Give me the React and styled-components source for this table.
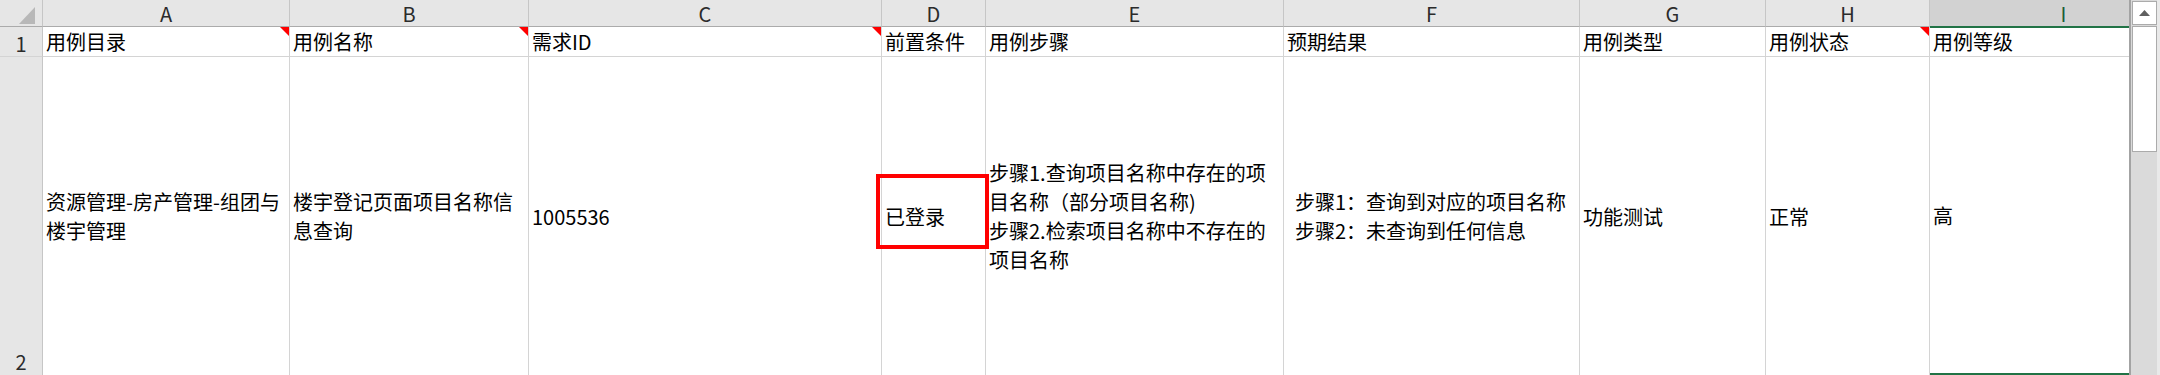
import React from "react";
import styled, { createGlobalStyle, css } from "styled-components";

const GlobalStyle = createGlobalStyle`
  html, body { margin: 0; padding: 0; background: #ffffff; }
  * { box-sizing: border-box; }
`;

const FONT = `"Liberation Sans Narrow", "Noto Sans CJK SC", "Noto Sans", sans-serif`;
const GRID = "#d4d4d4";
const HEAD_LINE = "#c6c6c6";
const GREEN = "#217346";

const columns = [
  { key: "A", width: 247, title: "用例目录", comment: true, lines: ["资源管理-房产管理-组团与", "楼宇管理"] },
  { key: "B", width: 239, title: "用例名称", comment: true, lines: ["楼宇登记页面项目名称信", "息查询"] },
  { key: "C", width: 353, title: "需求ID", comment: true, lines: ["1005536"] },
  { key: "D", width: 104, title: "前置条件", lines: ["已登录"], highlight: true },
  {
    key: "E",
    width: 298,
    title: "用例步骤",
    lines: ["步骤1.查询项目名称中存在的项", "目名称（部分项目名称)", "步骤2.检索项目名称中不存在的", "项目名称"],
  },
  {
    key: "F",
    width: 296,
    title: "预期结果",
    lines: ["步骤1：查询到对应的项目名称", "步骤2：未查询到任何信息"],
    indent: true,
  },
  { key: "G", width: 186, title: "用例类型", lines: ["功能测试"] },
  { key: "H", width: 164, title: "用例状态", comment: true, lines: ["正常"] },
  { key: "I", width: 268, title: "用例等级", lines: ["高"], selected: true },
];

const Window = styled.div`
  display: flex;
  width: 2160px;
  height: 375px;
  overflow: hidden;
  font-family: ${FONT};
  color: #000;
`;

const Sheet = styled.div`
  flex: 1;
  min-width: 0;
  display: grid;
  grid-template-columns: 43px ${(p) => p.$cols};
  grid-template-rows: 27px 30px 318px;
  overflow: hidden;
  background: #fff;
`;

const Corner = styled.div`
  background: #e6e6e6;
  border-right: 1px solid ${HEAD_LINE};
  border-bottom: 1px solid #ababab;
  display: flex;
  justify-content: flex-end;
  align-items: flex-end;
  padding: 0 7px 2px 0;
`;

const CornerMark = styled.div`
  width: 0;
  height: 0;
  border-left: 16px solid transparent;
  border-bottom: 17px solid #b8b8b8;
`;

const ColHeader = styled.div`
  position: relative;
  background: ${(p) => (p.$selected ? "#d2d2d2" : "#e6e6e6")};
  border-right: 1px solid ${HEAD_LINE};
  border-bottom: 1px solid ${(p) => (p.$selected ? GREEN : "#ababab")};
  ${(p) =>
    p.$selected &&
    css`
      box-shadow: 0 1px 0 ${GREEN};
      z-index: 1;
    `}
  display: flex;
  justify-content: center;
  align-items: center;
  font-size: 20px;
  line-height: 24px;
  padding-top: 2px;
  color: ${(p) => (p.$selected ? "#1b5e38" : "#2b2b2b")};
`;

const RowHeader = styled.div`
  background: #e6e6e6;
  border-right: 1px solid ${HEAD_LINE};
  border-bottom: ${(p) => (p.$last ? "none" : `1px solid ${GRID}`)};
  display: flex;
  justify-content: center;
  align-items: flex-end;
  font-size: 20px;
  line-height: 20px;
  padding-bottom: ${(p) => (p.$last ? "3px" : "2px")};
  color: #2b2b2b;
`;

const Cell = styled.div`
  position: relative;
  border-right: 1px solid ${GRID};
  border-bottom: ${(p) =>
    p.$selected && p.$last ? `2px solid ${GREEN}` : p.$last ? "none" : `1px solid ${GRID}`};
  display: flex;
  align-items: center;
  padding-left: ${(p) => (p.$indent ? "11px" : "3px")};
  font-size: 20px;
  line-height: 29px;
  white-space: pre;
  overflow: visible;
`;

const Lines = styled.div`
  display: flex;
  flex-direction: column;
`;

const Line = styled.span`
  display: block;
`;

const CommentMark = styled.span`
  position: absolute;
  top: 0;
  right: 0;
  width: 0;
  height: 0;
  border-left: 9px solid transparent;
  border-top: 9px solid #ff0000;
`;

const Highlight = styled.div`
  position: absolute;
  left: -6px;
  top: 117px;
  width: 113px;
  height: 75px;
  border: 4px solid #ff0000;
  z-index: 2;
  pointer-events: none;
`;

const ScrollBar = styled.div`
  width: 31px;
  flex: none;
  background: #dadada;
  border-left: 2px solid #a3a3a3;
  display: flex;
  flex-direction: column;
  gap: 1px;
  padding: 1px 3px 0 1px;
  box-shadow: inset -3px 0 0 #e9e9e9;
`;

const ScrollButton = styled.div`
  height: 24px;
  background: #fff;
  border: 1px solid #ababab;
  display: flex;
  align-items: center;
  justify-content: center;
`;

const ScrollThumb = styled.div`
  height: 126px;
  background: #fff;
  border: 1px solid #ababab;
`;

export default function App() {
  const cols = columns.map((c) => `${c.width}px`).join(" ");
  return (
    <>
      <GlobalStyle />
      <Window>
        <Sheet $cols={cols}>
          <Corner>
            <CornerMark />
          </Corner>
          {columns.map((c) => (
            <ColHeader key={`h-${c.key}`} $selected={c.selected}>
              {c.key}
            </ColHeader>
          ))}

          <RowHeader>1</RowHeader>
          {columns.map((c) => (
            <Cell key={`r1-${c.key}`}>
              {c.title}
              {c.comment && <CommentMark />}
            </Cell>
          ))}

          <RowHeader $last>2</RowHeader>
          {columns.map((c) => (
            <Cell key={`r2-${c.key}`} $last $selected={c.selected} $indent={c.indent}>
              <Lines>
                {c.lines.map((l, i) => (
                  <Line key={i}>{l}</Line>
                ))}
              </Lines>
              {c.highlight && <Highlight />}
            </Cell>
          ))}
        </Sheet>
        <ScrollBar>
          <ScrollButton>
            <svg width="11" height="6" viewBox="0 0 11 6">
              <polygon points="5.5,0 11,6 0,6" fill="#606060" />
            </svg>
          </ScrollButton>
          <ScrollThumb />
        </ScrollBar>
      </Window>
    </>
  );
}
